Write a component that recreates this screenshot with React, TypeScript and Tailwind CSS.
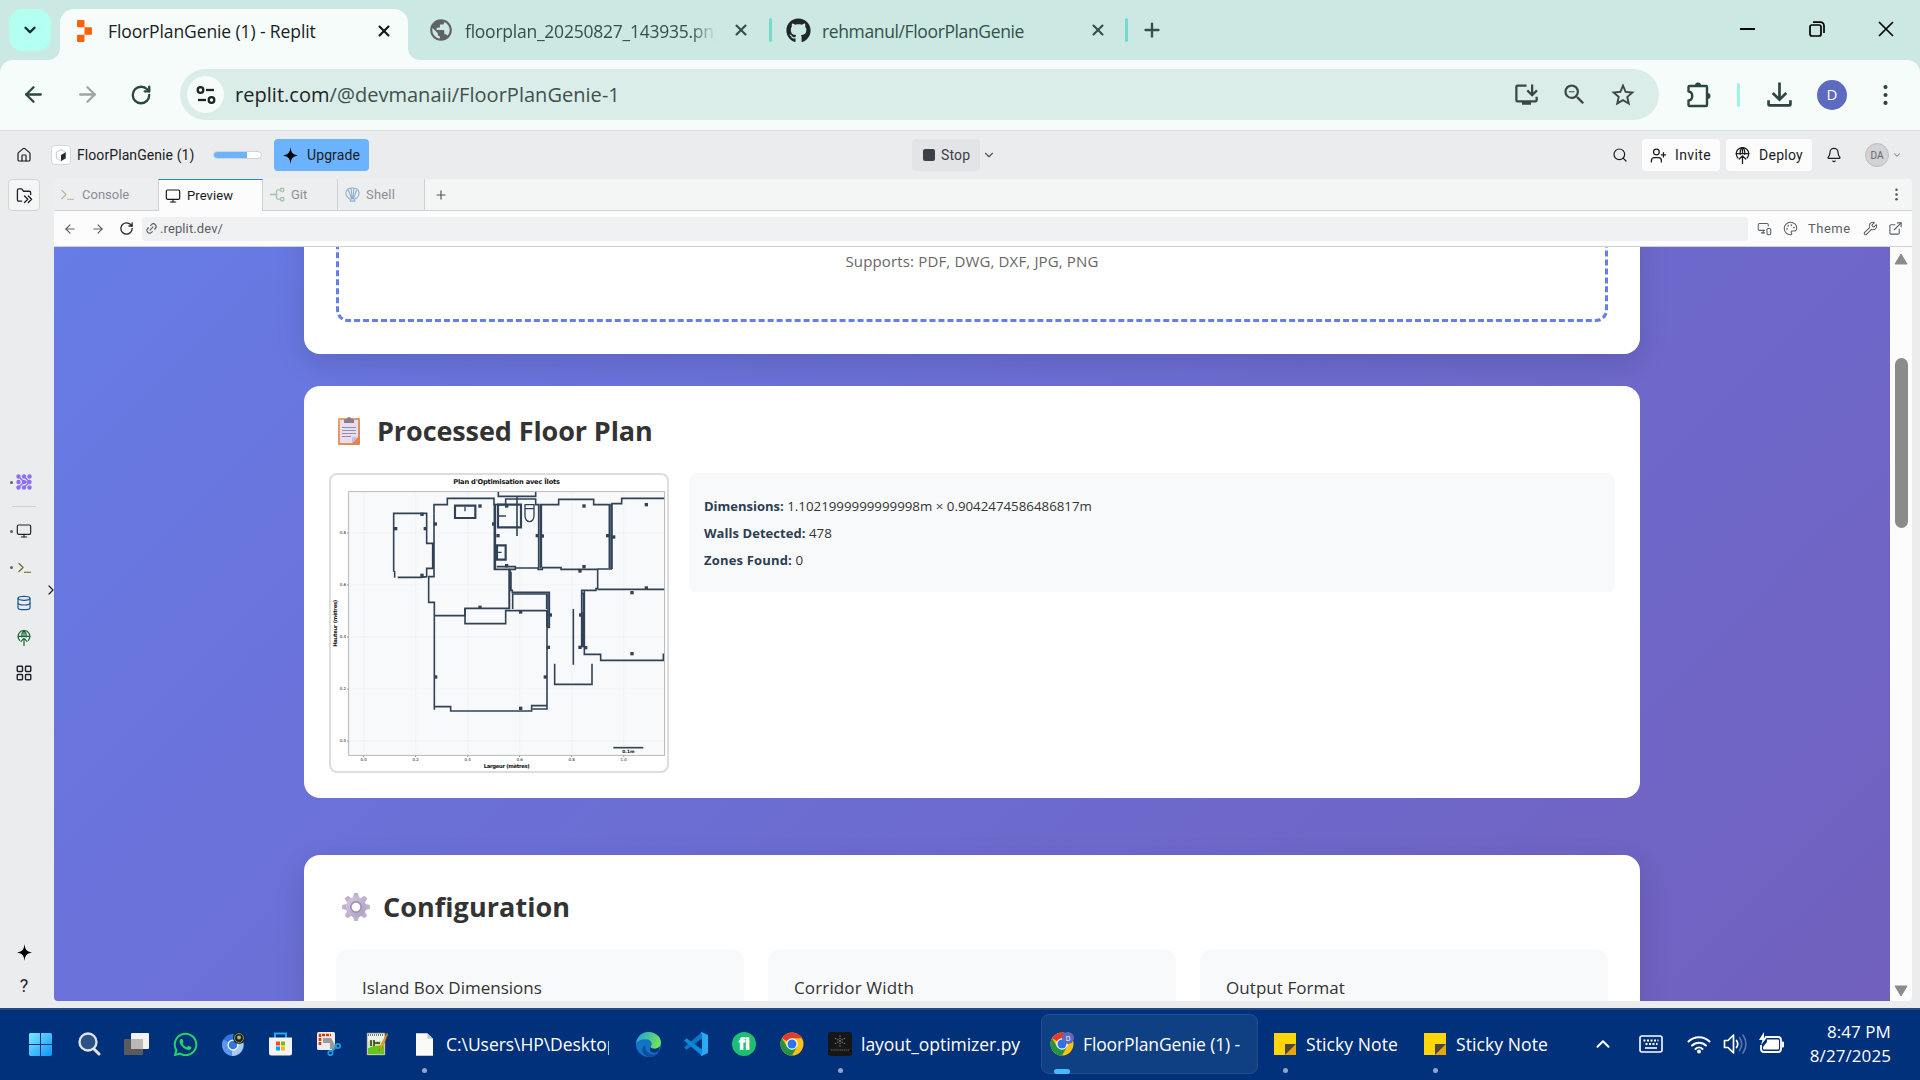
import type { ReactNode } from "react";
import {
  ArrowLeft, ArrowRight, Bell, ChevronDown, ChevronRight, ChevronUp, Database, ExternalLink, House, LayoutGrid,
  Link2, Monitor, MonitorSmartphone, Palette, Plus, RotateCw, Search, UserPlus, Wrench, X,
} from "lucide-react";
import { FaGithub, FaWhatsapp } from "react-icons/fa";
import { MdInstallDesktop, MdPublic, MdStarBorder, MdZoomOut } from "react-icons/md";
import { VscVscode } from "react-icons/vsc";

const SPARK = "M12 0c.8 7.500 2.800 10.800 10.500 12-7.700 1.200-9.700 4.500-10.500 12-.8-7.500-2.800-10.800-10.500-12C9.200 10.800 11.200 7.500 12 0z";

function Spark({ className }: { className: string }) {
  return <svg viewBox="0 0 24 24" className={className}><path d={SPARK} fill="currentColor" /></svg>;
}

function Balloon({ className }: { className: string }) {
  return (
    <svg viewBox="0 0 24 24" className={className} fill="none" stroke="currentColor" strokeWidth="1.800" strokeLinecap="round">
      <path d="M5.500 15.500A8.800 8.800 0 1 1 18.500 15.500" />
      <path d="M3.300 9.500h17.400M12 1v8.500M8.800 10.500C8.300 6 10 2 12 1c2 1 3.700 5 3.200 9.500" />
      <path d="M12 23.500V13M7.500 17l4.500-4.500 4.500 4.500" />
    </svg>
  );
}

function Terminal({ className }: { className: string }) {
  return (
    <svg viewBox="0 0 16 16" className={className} fill="none" stroke="currentColor" strokeWidth="1.200" strokeLinecap="round" strokeLinejoin="round">
      <path d="M2 3.500l4.500 4.500L2 12.500M8 13h6.500" />
    </svg>
  );
}

function Dots({ className }: { className: string }) {
  return (
    <svg viewBox="0 0 6 26" className={className} fill="currentColor">
      <circle cx="3" cy="3.500" r="2.500" /><circle cx="3" cy="13" r="2.500" /><circle cx="3" cy="22.500" r="2.500" />
    </svg>
  );
}

function TabStrip() {
  return (
    <div className="flex h-[60px] bg-[#cce8e2]">
      <div className="ml-[9px] mt-[9px] flex h-[42px] w-[42px] items-center justify-center rounded-[14px] bg-[#b3fff1]">
        <ChevronDown className="h-[18px] w-[18px] text-[#1b2b29]" strokeWidth={3.2} />
      </div>
      <div className="relative ml-[9px] mt-[9px] flex h-[51px] w-[348px] items-center rounded-t-[14px] bg-[#f5fcfa]">
        <svg viewBox="0 0 12 12" className="absolute -left-[12px] bottom-0 h-3 w-3"><path d="M12 0v12H0A12 12 0 0 0 12 0z" fill="#f5fcfa" /></svg>
        <svg viewBox="0 0 12 12" className="absolute -right-[12px] bottom-0 h-3 w-3"><path d="M0 0v12h12A12 12 0 0 1 0 0z" fill="#f5fcfa" /></svg>
        <svg viewBox="0 0 15 18" className="-mt-[8px] ml-[17px] h-[22px] w-[15px] shrink-0" preserveAspectRatio="none" fill="#fd6005">
          <path d="M1 0h5.500q1 0 1 1v5H1Q0 6 0 5V1q0-1 1-1zM7.500 6H14q1 0 1 1v4q0 1-1 1H7.500zM1 12h6.500v5q0 1-1 1H1q-1 0-1-1v-4q0-1 1-1z" />
        </svg>
        <span className="-mt-[6px] ml-4 whitespace-pre text-[17.500px] tracking-[-0.11px] text-[#18211f]">FloorPlanGenie (1) - Replit</span>
        <X className="-mt-[8px] absolute left-[315px] h-[18px] w-[18px] text-[#111917]" strokeWidth={2.8} />
      </div>
      <div className="flex h-[60px] items-center text-[17.500px] text-[#33504a]">
        <MdPublic className="ml-[20px] h-[26px] w-[26px] shrink-0 text-[#5f6368]" />
        <span className="ml-[11px] mt-[2px] w-[251px] overflow-hidden whitespace-nowrap tracking-[-0.24px] [mask-image:linear-gradient(90deg,#000_90%,transparent)]">floorplan_20250827_143935.png</span>
        <X className="ml-[16px] h-[18px] w-[18px]" strokeWidth={2.8} />
        <div className="ml-[19px] h-6 w-[3px] rounded bg-[#75dacb]" />
        <FaGithub className="ml-[14px] h-[25px] w-[25px] text-[#20272b]" />
        <span className="ml-[11px] mt-[2px] w-[258px] tracking-[-0.37px]">rehmanul/FloorPlanGenie</span>
        <X className="ml-[9px] h-[18px] w-[18px]" strokeWidth={2.8} />
        <div className="ml-[18px] h-6 w-[3px] rounded bg-[#75dacb]" />
        <Plus className="ml-[13px] h-[22px] w-[22px]" strokeWidth={2.6} />
      </div>
      <div className="ml-auto flex h-[58px] items-center text-black">
        <div className="h-[2px] w-[15px] bg-black" />
        <svg viewBox="0 0 16 16" className="ml-[54px] h-[16px] w-[16px]" fill="none" stroke="currentColor" strokeWidth="1.700">
          <rect x="1" y="4" width="11" height="11" rx="2" /><path d="M4 1.200h7.500a3.500 3.500 0 0 1 3.500 3.500V12" />
        </svg>
        <svg viewBox="0 0 16 16" className="ml-[53px] mr-[26px] h-[16px] w-[16px]" fill="none" stroke="currentColor" strokeWidth="1.700"><path d="M1 1l14 14M15 1L1 15" /></svg>
      </div>
    </div>
  );
}

function Toolbar() {
  return (
    <div className="bg-[#cce8e2]">
      <div className="flex h-[71px] items-center rounded-t-[13px] border-b border-[#d5e0dd] bg-[#f5fcfa] pb-px text-[#2c4641]">
        <ArrowLeft className="ml-[21px] h-[25px] w-[25px]" strokeWidth={2.2} />
        <ArrowRight className="ml-[29px] h-[25px] w-[25px] text-[#9da5a3]" strokeWidth={2.2} />
        <RotateCw className="ml-[30px] h-[22px] w-[22px]" strokeWidth={2.500} />
        <div className="ml-[28px] flex h-[51px] w-[1479px] items-center rounded-full bg-[#daede8]">
          <div className="ml-[7px] flex h-[37px] w-[37px] items-center justify-center rounded-full bg-[#f5fcfa]">
            <svg viewBox="0 0 20 20" className="h-[20px] w-[20px]" fill="none" stroke="#1d2826" strokeWidth="2.300">
              <circle cx="4.500" cy="5" r="2.800" /><path d="M10 5h8" /><circle cx="15.500" cy="15" r="2.800" /><path d="M2 15h8" />
            </svg>
          </div>
          <span className="ml-[11px] text-[20px] tracking-[0.03px] text-[#42504d]"><span className="text-[#1a2624]">replit.com</span>/@devmanaii/FloorPlanGenie-1</span>
          <MdInstallDesktop className="ml-auto h-[27px] w-[27px] text-[#3c4745]" />
          <MdZoomOut className="ml-[21px] h-[27px] w-[27px] text-[#3c4745]" />
          <MdStarBorder className="ml-[21px] mr-[22px] h-[28px] w-[28px] text-[#3c4745]" />
        </div>
        <svg viewBox="0 0 26 26" className="ml-[27px] h-[26px] w-[26px]" fill="none" stroke="currentColor" strokeWidth="2.400" strokeLinejoin="round">
          <path d="M2.500 5q0-1 1-1H20q1 0 1 1v18q0 1-1 1H3.500q-1 0-1-1v-4.500c5-.5 5-8.500 0-9z" />
          <path d="M9 3.500a3 3 0 0 1 6 0zM21.500 11a3 3 0 0 1 0 6z" fill="currentColor" stroke="none" />
        </svg>
        <div className="ml-[25px] h-6 w-[3px] rounded bg-[#9cf5e8]" />
        <svg viewBox="0 0 24 24" className="ml-[27px] h-[25px] w-[25px]" fill="none" stroke="currentColor" strokeWidth="2.600">
          <path d="M12 .5v16M5.500 10.500l6.500 6.500 6.500-6.500M1.500 17.500v4q0 1 1 1h19q1 0 1-1v-4" />
        </svg>
        <div className="ml-[25px] flex h-[30px] w-[30px] items-center justify-center rounded-full bg-[#5c6bc0] text-[15px] text-white">D</div>
        <Dots className="ml-[36px] h-[22px] w-[5px]" />
      </div>
    </div>
  );
}

function ReplitHeader() {
  return (
    <div className="flex h-[48px] items-center font-[Roboto,sans-serif] text-[14px] text-[#1b1d22]">
      <House className="ml-[16px] h-[16px] w-[16px]" strokeWidth={1.8} />
      <div className="ml-[19px] flex h-[20px] w-[20px] items-center justify-center rounded border border-[#d5d7da] bg-white">
        <svg viewBox="0 0 12 14" className="h-[13px] w-[12px]"><path d="M6 .7l5 2.800v6.500l-5 3-5-3V3.500z" fill="#fff" stroke="#aaa" strokeWidth=".7" /><path d="M6 6.500l5-3V10l-5 3z" fill="#222a33" /></svg>
      </div>
      <span className="ml-[6px] w-[130px] tracking-[0.080px]">FloorPlanGenie (1)</span>
      <div className="ml-[6px] h-[8px] w-[49px] overflow-hidden rounded-full border border-[#d1d4d7] bg-white"><div className="h-full w-[33px] bg-[#6bb3ff]" /></div>
      <div className="ml-[12px] flex h-[32px] w-[95px] items-center rounded bg-[#6bb3ff]">
        <Spark className="ml-[8px] h-[17px] w-[17px] text-black" /><span className="ml-[8px] tracking-[0.1px]">Upgrade</span>
      </div>
      <div className="ml-[543px] flex h-[32px] w-[68px] items-center rounded bg-[#e3e4e6] text-[#3b3e46]">
        <div className="ml-[11px] h-[12px] w-[12px] rounded-[2px] bg-[#3c4049]" /><span className="ml-[6px] tracking-[0.150px]">Stop</span>
      </div>
      <ChevronDown className="ml-[2px] h-[14px] w-[14px] text-[#50545c]" strokeWidth={2} />
      <Search className="ml-auto h-[16px] w-[16px]" strokeWidth={1.8} />
      <div className="ml-[14px] flex h-[32px] w-[78px] items-center rounded bg-[#fcfcfc]">
        <UserPlus className="ml-[8px] h-[17px] w-[17px]" strokeWidth={1.8} /><span className="ml-[8px] tracking-[0.38px]">Invite</span>
      </div>
      <div className="ml-[6px] flex h-[32px] w-[86px] items-center rounded bg-[#fcfcfc]">
        <Balloon className="ml-[8px] h-[17px] w-[17px]" /><span className="ml-[8px] tracking-[0.27px]">Deploy</span>
      </div>
      <Bell className="ml-[14px] h-[16px] w-[16px]" strokeWidth={1.8} />
      <div className="ml-[23px] flex h-[24px] w-[24px] items-center justify-center rounded-full border border-[#bcbec1] bg-[#d2d3d5] text-[10px] text-[#60646c]">DA</div>
      <ChevronDown className="ml-[3px] mr-[18px] h-[10px] w-[10px] text-[#84878d]" strokeWidth={2.500} />
    </div>
  );
}

function AgentIcon() {
  return (
    <svg viewBox="0 0 16 16" className="h-[16px] w-[16px]" fill="#8b6ff5" stroke="#8b6ff5">
      {[2.500, 8, 13.500].map((x) => [2.500, 8, 13.500].map((y) => <circle key={x + "-" + y} cx={x} cy={y} r="2.200" stroke="none" />))}
      <path d="M2.500 2.500L8 8l-5.500 5.500M8 2.500L13.500 8 8 13.500M8 8h5.500" fill="none" strokeWidth="1.500" />
    </svg>
  );
}

function SideItem({ dot, children }: { dot?: boolean; children: ReactNode }) {
  return (
    <div className="relative flex h-[16px] w-[48px] items-center justify-center">
      {dot && <div className="absolute left-[10px] h-[3px] w-[3px] rounded-full bg-[#5d6169]" />}
      {children}
    </div>
  );
}

function Sidebar() {
  return (
    <div className="relative flex w-[54px] flex-col text-[#202329]">
      <div className="ml-[8px] flex h-[32px] w-[32px] items-center justify-center rounded border border-[#d2d4d6] bg-[#f5f6f6]">
        <svg viewBox="0 0 18 18" className="h-[17px] w-[17px]" fill="none" stroke="currentColor" strokeWidth="1.400" strokeLinejoin="round" strokeLinecap="round">
          <path d="M6 15H3q-1.500 0-1.500-1.500v-10Q1.500 2 3 2h3l2 2.500h6q1.500 0 1.500 1.500v2M9 9.500l3.500 3.500L9 16.500M13 9.500l3.500 3.500-3.500 3.500" />
        </svg>
      </div>
      <div className="mt-[263px] flex flex-col">
        <SideItem dot><AgentIcon /></SideItem>
        <div className="ml-[12px] mt-[16px] h-px w-[24px] bg-[#cdcfd2]" />
        <div className="mt-[16px]"><SideItem dot><Monitor className="h-[16px] w-[16px]" strokeWidth={1.8} /></SideItem></div>
        <div className="mt-[20px]"><SideItem dot><Terminal className="h-[15px] w-[15px] text-[#6b5d10]" /></SideItem></div>
        <div className="mt-[20px]"><SideItem><Database className="h-[16px] w-[16px] text-[#1c5896]" strokeWidth={1.8} /></SideItem></div>
        <div className="mt-[19px]"><SideItem><Balloon className="h-[16px] w-[16px] text-[#1b6a35]" /></SideItem></div>
        <div className="mt-[19px]"><SideItem><LayoutGrid className="h-[18px] w-[18px]" strokeWidth={1.900} /></SideItem></div>
      </div>
      <ChevronRight className="absolute left-[43px] top-[403px] h-[16px] w-[16px]" strokeWidth={1.8} />
      <div className="mt-[263px]"><SideItem><Spark className="h-[17px] w-[17px] text-black" /></SideItem></div>
      <div className="mt-[17px] w-[48px] text-center font-[Roboto,sans-serif] text-[18px] leading-[18px]">?</div>
    </div>
  );
}

function TabRow() {
  return (
    <div className="flex h-[32px] rounded-tr border-b border-[#cfd2d2] bg-[#f4f6f6] text-[13px] text-[#8b8e94]">
      <div className="flex w-[104px] items-center bg-[#edeef0]"><Terminal className="ml-[6px] h-[15px] w-[15px] text-[#b9b18f]" /><span className="ml-[7px]">Console</span></div>
      <div className="-mb-px flex w-[105px] items-center border-x border-t border-x-[#cfd2d2] border-t-[#1a88f5] bg-[#fcfcfc] text-[#17191d]"><Monitor className="ml-[6px] h-[16px] w-[16px]" strokeWidth={1.800} /><span className="ml-[6px] tracking-[0.08px]">Preview</span></div>
      <div className="flex w-[75px] items-center border-r border-[#cfd2d2] bg-[#edeef0]">
        <svg viewBox="0 0 16 16" className="ml-[7px] h-[15px] w-[15px] text-[#a3c3a9]" fill="none" stroke="currentColor" strokeWidth="1.400"><circle cx="13" cy="3" r="1.900" /><circle cx="13" cy="13" r="1.900" /><path d="M0 8h7M11 3H8.500Q7 3 7 4.500v7Q7 13 8.500 13H11" /></svg>
        <span className="ml-[6px]">Git</span>
      </div>
      <div className="flex w-[87px] items-center border-r border-[#cfd2d2] bg-[#edeef0]">
        <svg viewBox="0 0 16 16" className="ml-[7px] h-[15px] w-[15px] text-[#8fb0d3]" fill="none" stroke="currentColor" strokeWidth="1.200" strokeLinejoin="round"><path d="M5.500 13C3 11.500 1 9 1 6c0-3 3-5 7-5s7 2 7 5c0 3-2 5.500-4.500 7M5.500 15h5l-1-2.500h-3zM7 12.500L3.500 3M9 12.500L12.500 3M7.600 12.500L6.500 1.500M8.400 12.500l1.100-11" /></svg>
        <span className="ml-[6px] tracking-[0.18px]">Shell</span>
      </div>
      <div className="flex flex-1 items-center"><Plus className="ml-[9px] h-[14px] w-[14px] text-[#50545b]" strokeWidth={2} /><Dots className="ml-auto mr-[14px] h-[13px] w-[3px] text-[#50545b]" /></div>
    </div>
  );
}

function AddressRow() {
  return (
    <div className="flex h-[36px] items-center border-b border-[#cfd2d2] bg-[#fcfcfc] text-[13px] text-[#5b5f67]">
      <ArrowLeft className="ml-[9px] h-[14px] w-[14px]" strokeWidth={2} />
      <ArrowRight className="ml-[14px] h-[14px] w-[14px]" strokeWidth={2} />
      <RotateCw className="ml-[14px] h-[15px] w-[15px] text-[#24272c]" strokeWidth={2.100} />
      <div className="ml-[8px] flex h-[24px] w-[1606px] items-center rounded bg-[#eff0f2]"><Link2 className="ml-[3px] h-[13px] w-[13px] -rotate-45" strokeWidth={2.100} /><span className="ml-[2px] tracking-[0.11px]">.replit.dev/</span></div>
      <MonitorSmartphone className="ml-[9px] h-[15px] w-[15px]" strokeWidth={1.700} />
      <Palette className="ml-[11px] h-[15px] w-[15px]" strokeWidth={1.700} />
      <span className="ml-[10px] w-[43px] tracking-[0.5px]">Theme</span>
      <Wrench className="ml-[12px] h-[15px] w-[15px]" strokeWidth={1.700} />
      <ExternalLink className="ml-[10px] h-[15px] w-[15px]" strokeWidth={1.800} />
    </div>
  );
}

const WALLS = [
  "M224 353V335L221 333V160H320V250H342", "M233 352H303L320 350V325H342", "M338 250V325M340 250V325M342 160V350H326V427H343V749",
  "M342 160V134H382V115H522V134H526V327M523 134V328H568V445H435V491H557V452H681V747H637",
  "M343 467H435V445", "M343 740H392V753H635V737H681",
  "M535 95V109H647V95M557 134V117H647V134H656V325", "M591 110V228", "M526 134H557", "M530 320H586V328H570V391H577V397H688V502H682M681 452V502",
  "M586 324H654V328H667V323H723V328H833V386H828V391H785V562", "M661 325V134H716V118H821V134H868V325M664 134V322", "M578 447V402H680V447",
  "M876 327V131H905V115H1033M873 131V327H833M876 327H864", "M833 388H1033", "M793 392V583H842V601H1030V583H1033M790 400V562M787 456V562M785 400H791",
  "M760 447V614M704 611V673H816V611", "M568 330V445M573 335V391M684 400V502",
];
const STUDS = [[306, 163], [306, 346], [227, 206], [316, 206], [346, 192], [521, 192], [480, 138], [480, 442], [560, 138], [560, 317], [534, 227], [652, 227], [667, 228], [863, 227], [881, 231], [792, 138], [792, 320], [780, 333], [979, 134], [979, 384], [936, 398], [936, 581], [602, 456], [602, 745], [691, 465], [782, 465], [780, 562], [797, 563], [685, 562], [347, 651], [676, 651]];

function FloorPlan() {
  const yTicks: [string, number][] = [["0.8", 219], ["0.6", 375], ["0.4", 531], ["0.2", 687], ["0.0", 843]];
  const xTicks: [string, number][] = [["0.0", 131], ["0.2", 287], ["0.4", 443], ["0.6", 599], ["0.8", 755], ["1.0", 911]];
  return (
    <div className="h-[300px] w-[340px] shrink-0 overflow-hidden rounded-lg border-2 border-[#ddd] bg-white">
      <svg viewBox="33 45 1008 888" className="h-full w-full" fontFamily="DejaVu Sans, sans-serif">
        <rect x="86" y="95" width="948" height="791" fill="#f8f9fb" />
        {yTicks.map(([t, y]) => (
          <g key={t}><path d={`M86 ${y}H1033`} stroke="#edf0f1" strokeWidth="2" /><path d={`M81 ${y}h5`} stroke="#555" strokeWidth="2" /><text x="78" y={y + 4} fontSize="12" textAnchor="end" fill="#111">{t}</text></g>
        ))}
        {xTicks.map(([t, x]) => (
          <g key={t}><path d={`M${x} 95V886`} stroke="#edf0f1" strokeWidth="2" /><path d={`M${x} 886v5`} stroke="#555" strokeWidth="2" /><text x={x} y="903" fontSize="12" textAnchor="middle" fill="#111">{t}</text></g>
        ))}
        <g fill="none" stroke="#2f4256" strokeWidth="4.800">
          {WALLS.map((d) => <path key={d} d={d} />)}
          <path d="M405 137H466V174H405zM534 134H603V202H534zM531 256H557V299H531z" strokeWidth="6.500" />
          <path d="M435 140V154M536 168H558M534 277H545M615 134H642V168a13.500 17 0 0 1-27 0zM615 146H642" strokeWidth="4" />
        </g>
        {STUDS.map(([x, y]) => <rect key={x + "-" + y} x={x - 5} y={y - 5} width="10" height="10" fill="#2f4256" />)}
        <rect x="86" y="95" width="948" height="791" fill="none" stroke="#aaa" strokeWidth="2.500" />
        <path d="M880 863H970" stroke="#34475a" strokeWidth="5" />
        <text x="925" y="878" fontSize="13" fontWeight="700" textAnchor="middle" fill="#111">0.1m</text>
        <text x="560" y="72" fontSize="20" fontWeight="700" textAnchor="middle" textLength="320" fill="#111">Plan d'Optimisation avec Îlots</text>
        <text x="560" y="923" fontSize="16" fontWeight="700" textAnchor="middle" textLength="138" fill="#111">Largeur (mètres)</text>
        <text transform="translate(52 490) rotate(-90)" fontSize="16" fontWeight="700" textAnchor="middle" textLength="141" fill="#111">Hauteur (mètres)</text>
      </svg>
    </div>
  );
}

function Clipboard() {
  return (
    <svg viewBox="0 0 22 28" className="h-[28px] w-[22px]">
      <defs><linearGradient id="board" x1="0" y1="0" x2="1" y2="1"><stop offset="0" stopColor="#eca36b" /><stop offset="1" stopColor="#d68455" /></linearGradient></defs>
      <rect y="1" width="22" height="27" rx="1" fill="url(#board)" />
      <path d="M2 3h18v17l-6 6H2z" fill="#e6def0" /><path d="M14 26v-5q0-1 1-1h5z" fill="#c9bcd9" />
      <path d="M6 6V3.500Q6 2 7.500 2H9a2 2 0 0 1 4 0h1.500Q16 2 16 3.500V6z" fill="#857d8c" />
      <path d="M4 10.500h14M4 13.500h14M4 16.500h14M4 19.500h9" stroke="#8f869c" strokeWidth=".9" />
    </svg>
  );
}

function Gear() {
  return (
    <svg viewBox="-14 -14 28 28" className="h-[28px] w-[28px]">
      <defs><linearGradient id="gear" x1="0" y1="0" x2="1" y2="1"><stop offset="0" stopColor="#d6c9e4" /><stop offset="1" stopColor="#ab9dbd" /></linearGradient></defs>
      <g fill="#bfb1cf">{[0, 45, 90, 135, 180, 225, 270, 315].map((a) => <path key={a} d="M-3-9l.8-4.200Q-2-14-1-14h2q1 0 1.200.8L3-9z" transform={`rotate(${a})`} />)}</g>
      <circle r="10.300" fill="url(#gear)" /><circle r="6" fill="#a193b1" /><circle r="4.300" fill="#fff" />
    </svg>
  );
}

function AppPage() {
  return (
    <div className="flex h-[754px] w-[1858px] overflow-hidden rounded-b">
      <div className="w-[1836px] overflow-hidden bg-[linear-gradient(135deg,#677ce6,#6a73db_25%,#6d6acd_60%,#7160be)] pl-[250px]">
        <div className="-mt-[200px] flex h-[307px] w-[1336px] flex-col rounded-2xl bg-white px-8 pb-8 shadow-[0_10px_30px_rgba(0,0,0,0.12)]">
          <div className="flex flex-1 flex-col items-center justify-end rounded-xl border-[3px] border-dashed border-[#667eea] pb-[47px]">
            <span className="text-[15px] leading-[22px] tracking-[0.150px] text-[#666]">Supports: PDF, DWG, DXF, JPG, PNG</span>
          </div>
        </div>
        <div className="mt-8 h-[412px] w-[1336px] rounded-2xl bg-white pl-[25px] pr-[25px] pt-[25px]">
          <div className="flex h-[40px] items-center pl-[9px]"><Clipboard /><h2 className="ml-[17px] text-[27px] font-bold tracking-[-0.100px] text-[#333]">Processed Floor Plan</h2></div>
          <div className="mt-[22px] flex items-start gap-5">
            <FloorPlan />
            <div className="h-[119px] flex-1 rounded-lg bg-[#f8f9fb] px-[15px] pt-[20px] text-[13.300px] leading-[27px] text-[#333]">
              <p><b className="text-[13px] text-[#2c3e50]">Dimensions:</b> 1.1021999999999998m × 0.9042474586486817m</p>
              <p><b className="text-[13px] tracking-[0.050px] text-[#2c3e50]">Walls Detected:</b> 478</p>
              <p><b className="text-[13px] tracking-[0.180px] text-[#2c3e50]">Zones Found:</b> 0</p>
            </div>
          </div>
        </div>
        <div className="mt-[57px] h-[400px] w-[1336px] rounded-2xl bg-white px-8 pt-[32px] shadow-[0_10px_30px_rgba(0,0,0,0.12)]">
          <div className="flex h-[40px] items-center pl-[6px]"><Gear /><h2 className="ml-[13px] text-[27px] font-bold tracking-[0.050px] text-[#333]">Configuration</h2></div>
          <div className="mt-[22px] grid grid-cols-3 gap-6 text-[17px] font-medium text-[#333]">
            <div className="h-[300px] rounded-xl bg-[#f8f9fb] px-[26px] pt-[26px]">Island Box Dimensions</div>
            <div className="h-[300px] rounded-xl bg-[#f8f9fb] px-[26px] pt-[26px] tracking-[0.140px]">Corridor Width</div>
            <div className="h-[300px] rounded-xl bg-[#f8f9fb] px-[26px] pt-[26px] tracking-[0.060px]">Output Format</div>
          </div>
        </div>
      </div>
      <div className="flex w-[22px] flex-col items-center bg-[#fcfcfc]">
        <svg viewBox="0 0 14 12" className="mt-[6px] h-[12px] w-[14px]"><path d="M7 1l6 10H1z" fill="#8b8b8b" stroke="#8b8b8b" strokeLinejoin="round" /></svg>
        <div className="mt-[93px] h-[170px] w-[13px] rounded-full bg-[#8b8b8b]" />
        <svg viewBox="0 0 14 12" className="mb-[4px] mt-auto h-[12px] w-[14px]"><path d="M7 11L1 1h12z" fill="#8b8b8b" stroke="#8b8b8b" strokeLinejoin="round" /></svg>
      </div>
    </div>
  );
}

function ChromeLogo({ badge }: { badge?: boolean }) {
  return (
    <svg viewBox="0 0 48 48" className="h-[24px] w-[24px]">
      <circle cx="24" cy="24" r="23" fill="#fbc116" />
      <path d="M24 24L4.100 12.500A23 23 0 0 1 43.900 12.500H24z" fill="#e33b2e" />
      <path d="M4.100 12.500A23 23 0 0 0 24 47l10-17.500L24 24l-10 5.700z" fill="#229342" />
      <circle cx="24" cy="24" r="11.500" fill="#fff" /><circle cx="24" cy="24" r="9" fill="#2a73e8" />
      {badge && <><circle cx="36" cy="12" r="12" fill="#5c6bc0" /><text x="36" y="17" textAnchor="middle" fontSize="13" fill="#fff">D</text></>}
    </svg>
  );
}

function StickyIcon() {
  return <svg viewBox="0 0 22 22" className="h-[22px] w-[22px] shrink-0"><path d="M0 0h22v22H0z" fill="#ffd60a" /><path d="M11 22L22 11v11z" fill="#eda500" /><path d="M11 22V11h11z" fill="#4b4740" /></svg>;
}

function TaskDot() {
  return <div className="absolute bottom-[7px] h-[5px] w-[5px] rounded-full bg-[#8fa5c8]" />;
}

function Slot({ children }: { children: ReactNode }) {
  return <div className="relative flex h-[72px] w-[48px] shrink-0 items-center justify-center">{children}</div>;
}

function Taskbar() {
  return (
    <div className="flex h-[72px] items-center border-t-2 border-[#25497f] bg-[#00317a] pb-[2px] text-[17.500px] text-white">
      <div className="ml-[16px] flex h-[70px] items-center">
        <Slot>
          <svg viewBox="0 0 23 23" className="h-[23px] w-[23px]">
            <defs><linearGradient id="win" x1="0" y1="0" x2="1" y2="1"><stop offset="0" stopColor="#7beaff" /><stop offset="1" stopColor="#0d95f8" /></linearGradient></defs>
            <path d="M1 0h10v11H0V1zM12 0h10l1 1v10H12zM0 12h11v11H1l-1-1zM12 12h11v10l-1 1H12z" fill="url(#win)" />
          </svg>
        </Slot>
        <Slot><svg viewBox="0 0 24 24" className="ml-px h-[24px] w-[24px]" fill="#2d5287" stroke="#e2e5ea" strokeWidth="2.300" strokeLinecap="round"><circle cx="11" cy="10" r="8.500" /><path d="M17 17l5 5" strokeWidth="3" /></svg></Slot>
        <Slot><svg viewBox="0 0 25 24" className="ml-px h-[24px] w-[25px]"><rect x="7" y="1" width="18" height="16" rx="1" fill="#f2f2f2" /><rect x="0" y="7" width="19" height="16" rx="1" fill="#5b5b5b" /><path d="M7 7h12v10H7z" fill="#b9b9b9" /></svg></Slot>
        <Slot><FaWhatsapp className="ml-[2px] h-[27px] w-[27px] text-[#25d366]" /></Slot>
        <Slot>
          <svg viewBox="0 0 48 48" className="ml-[2px] h-[24px] w-[24px]">
            <circle cx="24" cy="26" r="22" fill="#2f74e0" /><path d="M24 26L5 15A22 22 0 0 0 20 47.600z" fill="#5a96f2" /><path d="M24 26l20-6a22 22 0 0 1-23 27.700z" fill="#a9c9fb" />
            <circle cx="24" cy="26" r="11" fill="#fff" /><circle cx="24" cy="26" r="8.500" fill="#3277dd" /><circle cx="36" cy="12" r="12" fill="#1d2318" /><circle cx="36" cy="12" r="9" fill="none" stroke="#a7b28e" strokeWidth="1.500" /><circle cx="36" cy="11" r="4" fill="#a7b28e" />
          </svg>
        </Slot>
        <Slot>
          <svg viewBox="0 0 23 24" className="h-[24px] w-[23px]"><path d="M6 6V1.500h11V6" fill="none" stroke="#27a8ee" strokeWidth="2" /><path d="M0 5.500h23V21q0 2.500-2.500 2.500h-18Q0 23.500 0 21z" fill="#f3f3f3" /><path d="M7 9.500h4v4H7z" fill="#f25022" /><path d="M12 9.500h4v4h-4z" fill="#7fba00" /><path d="M7 14.500h4v4H7z" fill="#00a4ef" /><path d="M12 14.500h4v4h-4z" fill="#ffb900" /></svg>
        </Slot>
        <Slot>
          <svg viewBox="0 0 24 24" className="ml-[2px] h-[24px] w-[24px]"><rect width="18" height="18" rx="1.500" fill="#ededed" /><path d="M3 13V3h11" fill="none" stroke="#d83b01" strokeWidth="2.600" strokeDasharray="3 1" /><path d="M6 6h8l4 7v4h-5V11H6z" fill="#9b9b9b" /><g fill="none" stroke="#1e9be0" strokeWidth="1.800"><circle cx="21" cy="14" r="2.200" /><circle cx="13.500" cy="21" r="2.200" /><path d="M15 19l4-4" /></g></svg>
        </Slot>
        <Slot>
          <svg viewBox="0 0 22 24" className="ml-px h-[24px] w-[22px]"><path d="M1 1h18v22H1z" fill="#eef2e4" stroke="#777" strokeWidth=".7" /><path d="M2 16q8-4 16-2v8H2z" fill="#63c61c" /><path d="M2 9h16v5Q9 12 2 16z" fill="#cfeaa6" /><path d="M5 8v6M8 8v6M9 11h5" stroke="#263114" strokeWidth="1.500" /><path d="M2 3h16" stroke="#555" strokeWidth="1.400" strokeDasharray="1 1" /><path d="M21 1l-7 14-1 4 3-3 6-14z" fill="#f0a31c" stroke="#a35e0d" strokeWidth=".5" /></svg>
        </Slot>
        <Slot>
          <svg viewBox="0 0 18 24" className="ml-px h-[23px] w-[17px]"><path d="M0 0h12l6 6v18H0z" fill="#fafafa" /><path d="M12 0v6h6z" fill="#c3c8cf" /></svg>
          <TaskDot />
        </Slot>
        <span className="-ml-[2px] w-[163px] overflow-hidden whitespace-nowrap tracking-[-0.050px]">C:\Users\HP\Desktop</span>
      </div>
      <div className="ml-[15px] flex h-[70px] items-center">
        <Slot>
          <svg viewBox="0 0 24 24" className="h-[25px] w-[25px]">
            <defs><linearGradient id="edge" x1="0" y1="0" x2="1" y2=".3"><stop offset="0" stopColor="#1b9de2" /><stop offset="1" stopColor="#6be35b" /></linearGradient></defs>
            <circle cx="12" cy="12" r="12" fill="#1272c4" /><path d="M0 11C1 4 6 0 12 0c7 0 12 5 12 10 0 4-3 6-6.500 6-3 0-4-1.200-3-2.500 2-3-1-6.500-5-6.500C5 7 1.500 8.500 0 11z" fill="url(#edge)" /><path d="M9 13c-1 5 3 8.500 8 8.500 2 0 4-.8 5-1.500-3 4-9 5.500-13 2.500-4-3-4-8 0-9.500z" fill="#0c4fa0" /><path d="M14.500 13.500c-1 1.300 0 2.500 3 2.500 2 0 4-.8 5.200-2.200L22 18c-5 4-11 1-7.500-4.500z" fill="#00317a" />
          </svg>
        </Slot>
        <Slot>
          <svg viewBox="0 0 24 24" className="h-[24px] w-[24px]">
            <path d="M18 0L0 15.500l2.500 2.300L18 6.500z" fill="#0a78c2" /><path d="M18 24L0 8.500l2.500-2.300L18 17.500z" fill="#0a8ad8" /><path d="M17.500 0L24 3v18l-6.500 3-.8-1 1.300-1V2l-1.300-1z" fill="#29aaf2" />
          </svg>
        </Slot>
        <Slot><div className="flex h-[24px] w-[24px] items-center justify-center rounded-full bg-[#1dbf73] pb-[2px] text-[17px] font-extrabold leading-none tracking-[-0.5px]">fi</div></Slot>
        <Slot><ChromeLogo /></Slot>
        <Slot>
          <svg viewBox="0 0 24 24" className="h-[24px] w-[24px]"><rect width="24" height="24" rx="3" fill="#161616" /><g fill="#888">{[0, 60, 120, 180, 240, 300].map((a) => <g key={a} transform={`translate(12 9) rotate(${a})`}><circle cy="-2.500" r=".7" /><circle cy="-5" r=".7" /></g>)}<circle cx="12" cy="9" r=".9" /></g><path d="M3 18h18" stroke="#484848" strokeDasharray="1.500 .6" strokeWidth="1.500" /></svg>
          <TaskDot />
        </Slot>
        <span className="-ml-[3px] w-[180px] tracking-[-0.040px]">layout_optimizer.py</span>
        <div className="relative flex h-[60px] w-[217px] items-center rounded-lg border border-[#24508c] bg-[#104084]">
          <div className="ml-[8px]"><ChromeLogo badge /></div>
          <span className="ml-[9px] whitespace-pre tracking-[-0.130px]">FloorPlanGenie (1) -</span>
          <div className="absolute -bottom-px left-[12px] h-[5px] w-[16px] rounded-full bg-[#45bbff]" />
        </div>
        <div className="relative ml-[16px] flex h-[72px] items-center"><StickyIcon /><div className="absolute bottom-0 left-[9px]"><TaskDot /></div><span className="ml-[10px] w-[118px] tracking-[0.100px]">Sticky Note</span></div>
        <div className="relative flex h-[72px] items-center"><StickyIcon /><div className="absolute bottom-0 left-[9px]"><TaskDot /></div><span className="ml-[10px] tracking-[0.100px]">Sticky Note</span></div>
      </div>
      <ChevronUp className="ml-auto h-[22px] w-[22px]" strokeWidth={2.200} />
      <svg viewBox="0 0 24 18" className="ml-[25px] h-[18px] w-[24px]" fill="none" stroke="#fff" strokeWidth="1.600"><rect x="1" y="1" width="22" height="16" rx="2" /><path d="M4.500 5.500h15M6.500 9h12" strokeDasharray="2 1.500" strokeWidth="2" /><path d="M6 13h12" /></svg>
      <svg viewBox="0 0 24 20" className="ml-[24px] h-[20px] w-[24px]" fill="none" stroke="#fff" strokeWidth="2" strokeLinecap="round"><path d="M1.500 7.500a15 15 0 0 1 21 0M5 11.500a10 10 0 0 1 14 0M8.500 15a5 5 0 0 1 7 0" /><circle cx="12" cy="17.500" r="1" fill="#fff" /></svg>
      <svg viewBox="0 0 25 24" className="ml-[12px] h-[24px] w-[25px]" fill="none" stroke="#fff" strokeWidth="1.700" strokeLinejoin="round" strokeLinecap="round"><path d="M1.500 8.500H5L10.500 3v18L5 15.500H1.500z" /><path d="M13.500 8.500q2.500 3.500 0 7" /><path d="M16.500 5.500q4.500 6.500 0 13M20 3q6 9 0 18" stroke="#5675a8" /></svg>
      <svg viewBox="0 0 25 24" className="ml-[11px] h-[24px] w-[25px]"><path d="M6 5h13q3 0 3 3v9q0 3-3 3H5q-3 0-3-3v-4" fill="none" stroke="#fff" strokeWidth="1.800" /><path d="M8 7.500h11q1 0 1 1v8q0 1-1 1H5q-1 0-1-1V15l4-5zM23 9.500h1q1 0 1 1v4q0 1-1 1h-1z" fill="#fff" /><path d="M5 0L0 8h3.500L2 13l6-7.500H5z" fill="#fff" /></svg>
      <div className="ml-[24px] mr-[29px] w-[83px] text-right text-[17px] leading-[24px] tracking-[0.080px]"><div>8:47 PM</div><div>8/27/2025</div></div>
    </div>
  );
}

export default function App() {
  return (
    <div className="flex h-[1080px] w-[1920px] flex-col overflow-hidden bg-[#ebecee] font-['Open_Sans','Noto_Sans',sans-serif]">
      <TabStrip />
      <Toolbar />
      <ReplitHeader />
      <div className="flex h-[829px]">
        <Sidebar />
        <div className="flex w-[1858px] flex-col">
          <div className="font-[Roboto,sans-serif]"><TabRow /><AddressRow /></div>
          <AppPage />
        </div>
      </div>
      <Taskbar />
    </div>
  );
}
